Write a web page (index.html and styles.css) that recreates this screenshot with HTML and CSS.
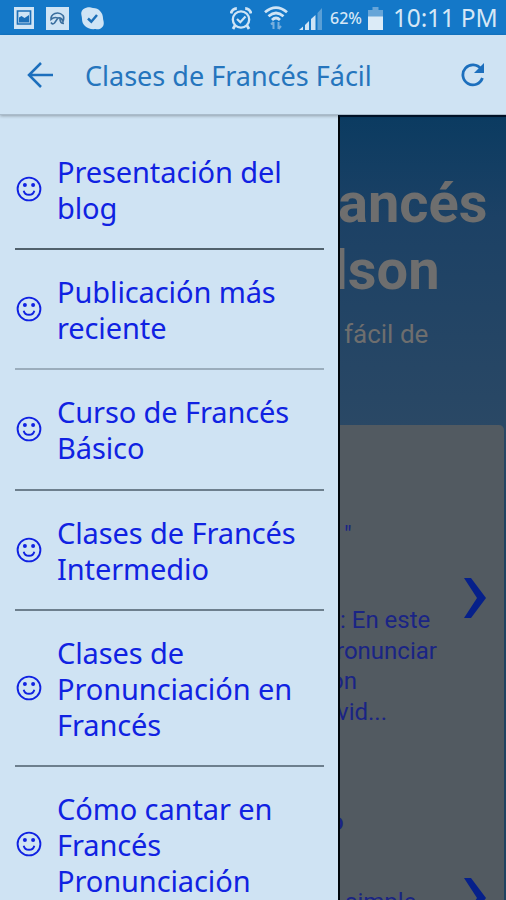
FILE: index.html
```html
<!DOCTYPE html>
<html lang="es">
<head>
  <meta charset="UTF-8" />
  <meta name="viewport" content="width=device-width, initial-scale=1.0"/>
  <title>Clases de Francés Fácil</title>
  <link rel="stylesheet" href="styles.css">
</head>
<body>

  <svg class="defs" width="0" height="0">
    <symbol id="smiley" viewBox="0 0 26 26">
      <circle cx="13" cy="13" r="11.4" fill="none" stroke="currentColor" stroke-width="1.9"/>
      <circle cx="8.9" cy="9" r="2" fill="currentColor"/>
      <circle cx="17.1" cy="9" r="2" fill="currentColor"/>
      <path d="M7.7 14.7c.6 2.6 2.7 4.1 5.3 4.1s4.7-1.5 5.3-4.1" fill="none" stroke="currentColor" stroke-width="1.9"/>
    </symbol>
  </svg>

  <div class="status-bar">
    <div class="notifications">
      <svg width="20" height="22" viewBox="0 0 20 22">
        <rect width="20" height="22" fill="#cfe4f5"/>
        <path d="M3.5 4h13v13h-13z" fill="none" stroke="#1c6fb8" stroke-width="1.7"/>
        <path d="M5 15.500v-5l2.500-1.500 3 2 4.500-3v7.500z" fill="#1c6fb8"/>
      </svg>
      <svg width="23" height="23" viewBox="0 0 23 23">
        <rect width="23" height="23" fill="#cfe4f5"/>
        <path d="M5 12.500C4.500 7 12 3.500 17 8.500q1.500 2 0 6c-1-3-3-4-5-3.500-3-1-5-.5-7 1.500zM12 11l-3.500 5q-2 2-3.500-.5M14 12q0 4.500 4 4.500" fill="none" stroke="#3b6f9f" stroke-width="1.6"/>
      </svg>
      <svg width="23" height="23" viewBox="0 0 23 23">
        <path d="M6 .5C9-.2 10 1 12 1c6 0 10 5 10 10 0 2 1 3 .7 6-.4 4-4.5 6-8 5C6 23 1 18 1 12 1 9 0 8 .3 5.500.7 3 3 1 6 .5z" fill="#cfe4f5"/>
        <path d="M7 11.500l3.300 3.200L16 8" fill="none" stroke="#1c6fb8" stroke-width="2.500"/>
      </svg>
    </div>
    <svg class="alarm" width="22" height="23" viewBox="0 0 22 23" fill="none" stroke="#cfe4f5">
      <circle cx="11" cy="12.500" r="8.200" stroke-width="2.300"/>
      <path d="M1 6.500C1.500 3.500 4 1.500 6.800 1.500M21 6.500C20.500 3.500 18 1.500 15.200 1.500M5 18.500l-2 3.500M17 18.500l2 3.500" stroke-width="2.800"/>
      <path d="M7 12l3.300 3.200L15.500 9.500" stroke-width="2.200"/>
    </svg>
    <svg class="wifi" width="24" height="24" viewBox="0 0 24 24" fill="none" stroke="#cfe4f5" stroke-width="2.800">
      <path d="M1 6.200Q12-3 23 6.200M4.500 10.200Q12 3.800 19.500 10.200M8 14Q12 10 16 14"/>
      <path d="M9.500 23v-7M7 18.500L9.500 16M14.500 16v7M17 20l-2.500 3" stroke="#78afdd" stroke-width="2"/>
    </svg>
    <svg class="signal" width="24" height="23" viewBox="0 0 24 23" fill="#cfe4f5">
      <path d="M0 23l4-3.500V23zM6 18l4-4v9H6zM12 12l4.500-4v15H12z"/>
      <path d="M18.500 6l4.500-5v22h-4.500z" fill="#5a9fd6"/>
    </svg>
    <span class="battery-level">62%</span>
    <svg class="battery" width="15" height="23" viewBox="0 0 15 23">
      <path d="M4.500 0h6v3H15v7H0V3h4.500z" fill="#67a5d8"/>
      <path d="M0 9.500h15V23H0z" fill="#dcebf7"/>
    </svg>
    <span class="clock">10:11 PM</span>
  </div>

  <header class="toolbar">
    <svg class="back" width="26" height="26" viewBox="0 0 26 26" fill="none" stroke="#1c6fbd" stroke-width="2.500">
      <path d="M14 1L2 13l12 12M2 13h24"/>
    </svg>
    <h1>Clases de Francés Fácil</h1>
    <svg class="refresh" width="24" height="24" viewBox="0 0 24 24">
      <path d="M20 6A10 10 0 1 0 21.400 15" fill="none" stroke="#1c6fbd" stroke-width="2.800"/>
      <path d="M23 0v10H13z" fill="#1c6fbd"/>
    </svg>
  </header>

  <div class="main">
    <nav class="drawer">
      <a class="item dark"><svg class="smiley"><use href="#smiley"/></svg><span>Presentación del<br>blog</span></a>
      <a class="item light"><svg class="smiley"><use href="#smiley"/></svg><span>Publicación más<br>reciente</span></a>
      <a class="item"><svg class="smiley"><use href="#smiley"/></svg><span>Curso de Francés<br>Básico</span></a>
      <a class="item"><svg class="smiley"><use href="#smiley"/></svg><span>Clases de Francés<br>Intermedio</span></a>
      <a class="item"><svg class="smiley"><use href="#smiley"/></svg><span>Clases de<br>Pronunciación en<br>Francés</span></a>
      <a class="item"><svg class="smiley"><use href="#smiley"/></svg><span>Cómo cantar en<br>Francés<br>Pronunciación</span></a>
    </nav>

    <div class="page">
      <div class="hero">
        <h2>ancés<br><span class="cut">lson</span></h2>
        <p>fácil de</p>
      </div>
      <div class="posts">
        <div class="post">
          <div class="text">
            <h3>"</h3>
            <p>: En este<br><span class="cut-r">ronunciar</span><br><span class="cut-o">on</span><br><span class="cut-v">vid...</span></p>
          </div>
          <svg class="chevron" width="22" height="40" viewBox="0 0 22 40"><path d="M0 0h7l15 20L7 40H0l13-20z"/></svg>
        </div>
        <div class="post second">
          <div class="text">
            <h3>o</h3>
            <p>simple</p>
          </div>
          <svg class="chevron" width="22" height="40" viewBox="0 0 22 40"><path d="M0 0h7l15 20L7 40H0l13-20z"/></svg>
        </div>
      </div>
    </div>
  </div>

</body>
</html>
```
FILE: styles.css
```css
* {
  box-sizing: border-box;
}

body {
  margin: 0;
  width: 506px;
  height: 900px;
  overflow: hidden;
  display: flex;
  flex-direction: column;
  font-family: 'Noto Sans', sans-serif;
  background-color: #cfe3f3;
}

h1, h2, h3, p {
  margin: 0;
}

svg {
  display: block;
  flex: none;
}

.defs {
  display: none;
}

.status-bar {
  height: 35px;
  flex: none;
  display: flex;
  align-items: center;
  padding: 1px 9px 0 14px;
  background-color: #1478c8;
  color: #d5e7f6;
}

.notifications {
  display: flex;
  align-items: center;
  gap: 12px;
  margin-right: auto;
}

.alarm {
  margin-right: 1px;
}

.wifi {
  margin-left: 11px;
}

.signal {
  margin-left: 11px;
}

.battery-level {
  width: 34px;
  margin-left: 7px;
  font-size: 16px;
  font-weight: 500;
}

.battery {
  margin-left: 4px;
}

.clock {
  width: 104px;
  margin-left: 10px;
  font-size: 24.5px;
  line-height: 30px;
  letter-spacing: -0.2px;
  white-space: nowrap;
}

.toolbar {
  height: 80px;
  flex: none;
  display: flex;
  align-items: center;
  padding: 0 21px 0 27px;
  border-bottom: 1px solid #aabccb;
  box-shadow: 0 1px 3px rgba(0, 0, 0, 0.3);
  position: relative;
}

.toolbar h1 {
  margin: 2px auto 0 32px;
  font-size: 27px;
  font-weight: normal;
  color: #2575bd;
  white-space: nowrap;
}

.main {
  flex: 1;
  min-height: 0;
  display: flex;
}

.drawer {
  width: 338px;
  flex: none;
  padding: 15px 14px 0 15px;
  overflow: hidden;
}

.item {
  display: flex;
  align-items: center;
  padding: 24px 0 22px;
  border-bottom: 2px solid #6d7f8d;
  color: #1022e2;
  font-size: 29px;
  line-height: 36.1px;
  letter-spacing: -0.1px;
  white-space: nowrap;
}

.item.dark {
  border-color: #51616c;
}

.item.light {
  border-color: #9badbc;
}

.smiley {
  width: 26px;
  height: 26px;
  margin: -2px 15px 0 1px;
}

.page {
  flex: 1;
  min-width: 0;
  display: flex;
  flex-direction: column;
  overflow: hidden;
  border-left: 2px solid #00050a;
  border-top: 2px solid #02152e;
  background: linear-gradient(#0b3b61, #1c4165 100px, #2a4865 310px, #1f4361 400px);
  font-family: Roboto, sans-serif;
  white-space: nowrap;
}

.hero {
  height: 308px;
  flex: none;
  padding-top: 53px;
  color: #6e6e6e;
}

.hero h2 {
  margin-left: -2px;
  font-size: 56px;
  line-height: 67px;
}

.cut {
  margin-left: -5px;
}

.hero p {
  margin: 14px 0 0 4px;
  font-size: 26px;
  line-height: 32px;
}

.posts {
  flex: 1;
  margin-right: 2px;
  border-radius: 0 5px 0 0;
  background-color: #525a61;
  color: #1a2485;
}

.post {
  height: 346px;
  display: flex;
  align-items: center;
  justify-content: space-between;
  padding-right: 18px;
}

.post .text {
  align-self: flex-start;
  padding-top: 95px;
}

.post h3 {
  padding-left: 4px;
  font-size: 24px;
  line-height: 30px;
  font-weight: normal;
}

.post p {
  margin-top: 55px;
  font-size: 24px;
  line-height: 30.7px;
}

.cut-r {
  margin-left: -4px;
}

.cut-o {
  margin-left: -10px;
}

.cut-v {
  margin-left: -3px;
}

.chevron {
  fill: #06208a;
}

.second .text {
  padding-top: 36px;
}

.second h3 {
  margin-left: -14px;
  font-weight: 500;
}

.second p {
  margin: 50px 0 0 5px;
}

.second .chevron {
  align-self: flex-start;
  margin-top: 107px;
}
```
